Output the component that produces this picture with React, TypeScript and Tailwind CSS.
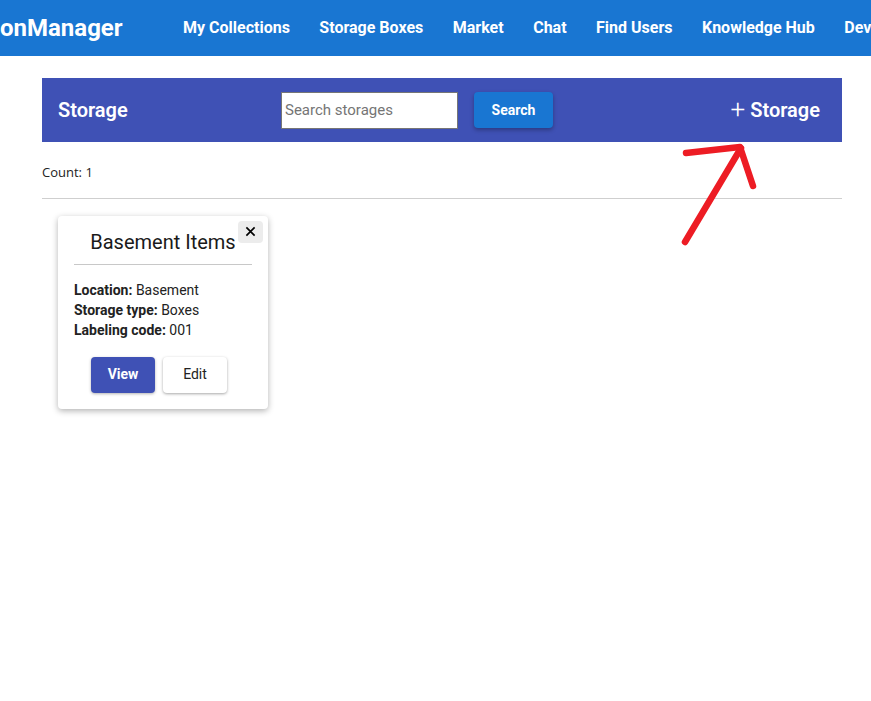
import React from "react";

export default function App() {
  const navItems = ["My Collections", "Storage Boxes", "Market", "Chat", "Find Users", "Knowledge Hub", "Dev"];
  return (
    <div className="relative w-[871px] h-[701px] overflow-hidden bg-white" style={{ fontFamily: "Roboto, 'Liberation Sans', sans-serif" }}>
      <nav className="h-[56px] bg-[#1976d2] flex items-center text-white whitespace-nowrap overflow-hidden">
        <div className="text-[24px] font-bold w-[122px] shrink-0">onManager</div>
        <div className="flex ml-[61px] gap-[29.5px] text-[16px] font-bold">
          {navItems.map((n) => (
            <span key={n}>{n}</span>
          ))}
        </div>
      </nav>

      <div className="ml-[42px] w-[800px] mt-[22px]">
        <div className="h-[64px] bg-[#3f51b5] flex items-center text-white">
          <div className="pl-[16px] text-[20px] font-semibold w-[127px] shrink-0">Storage</div>
          <div className="ml-[112px] flex items-center">
            <input
              placeholder="Search storages"
              className="w-[177px] h-[37px] bg-white border border-[#767676] px-[3px] text-[15px] text-black placeholder:text-[#757575] outline-none"
            />
            <button className="ml-[16px] w-[79px] h-[36px] rounded-[4px] bg-[#1976d2] text-white text-[14px] font-bold shadow-[0_2px_4px_rgba(0,0,0,0.3)]">
              Search
            </button>
          </div>
          <button className="ml-auto mr-[22px] flex items-center text-[20px] font-semibold text-white">
            <span className="text-[26px] font-light leading-none mr-[5px] mt-[-2px]">+</span>Storage
          </button>
        </div>

        <div className="mt-[21px] text-[13px] text-[#222]" style={{ fontFamily: "'Open Sans', sans-serif" }}>
          Count: 1
        </div>
        <div className="mt-[15px] h-px bg-[#cfcfcf]" />

        <div className="ml-[16px] mt-[17px] w-[210px] relative rounded-[4px] bg-white shadow-[0_2px_6px_rgba(0,0,0,0.3)] px-[16px] pt-[13px] pb-[16px]">
          <button className="absolute top-[5px] right-[5px] w-[25px] h-[22px] rounded-[4px] bg-[#ececec] flex items-center justify-center text-black">
            <svg width="11" height="11" viewBox="0 0 12 12">
              <path d="M1.5 1.5 L10.5 10.5 M10.5 1.5 L1.5 10.5" stroke="#000" strokeWidth="1.8" />
            </svg>
          </button>
          <div className="text-center text-[20px] text-[#1a1a1a] leading-[26px]">Basement Items</div>
          <div className="mt-[9px] h-px bg-[#c8c8c8]" />
          <div className="mt-[15px] text-[14px] leading-[20px] text-[#222]">
            <div><b>Location:</b> Basement</div>
            <div><b>Storage type:</b> Boxes</div>
            <div><b>Labeling code:</b> 001</div>
          </div>
          <div className="mt-[17px] flex gap-[8px] pl-[17px]">
            <button className="w-[64px] h-[36px] rounded-[4px] bg-[#3f51b5] text-white text-[14px] font-bold shadow-[0_1px_3px_rgba(0,0,0,0.3)]">View</button>
            <button className="w-[64px] h-[36px] rounded-[4px] bg-white text-[#222] text-[14px] font-normal shadow-[0_1px_3px_rgba(0,0,0,0.35)]">Edit</button>
          </div>
        </div>
      </div>

      <svg className="absolute left-0 top-0 pointer-events-none" width="871" height="701">
        <g stroke="#ed1c24" strokeWidth="6.5" strokeLinecap="round" strokeLinejoin="round" fill="none">
          <path d="M685 242 L741 148" />
          <path d="M686 153 L740 147 L753 186" />
        </g>
      </svg>
    </div>
  );
}
